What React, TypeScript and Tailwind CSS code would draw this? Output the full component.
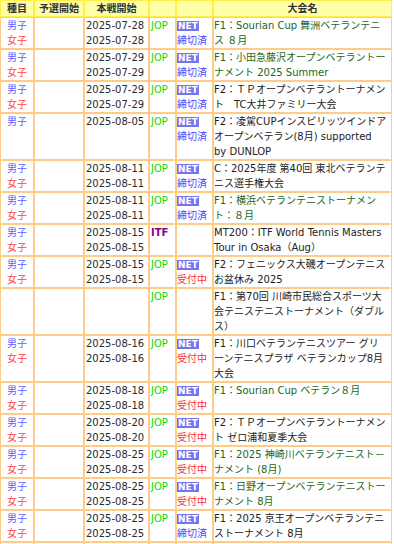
type Row = {
  boys?: boolean
  girls?: boolean
  dates: string[]
  cat: 'JOP' | 'ITF'
  net?: boolean
  status?: '締切済' | '受付中'
  name: string[]
  green?: boolean
}

const rows: Row[] = [
  { boys: true, girls: true, dates: ['2025-07-28', '2025-07-28'], cat: 'JOP', net: true, status: '締切済', name: ['F1：Sourian Cup 舞洲ベテランテニ', 'ス ８月'], green: true },
  { boys: true, girls: true, dates: ['2025-07-29', '2025-07-29'], cat: 'JOP', net: true, status: '締切済', name: ['F1：小田急藤沢オープンベテラントー', 'ナメント 2025 Summer'], green: true },
  { boys: true, girls: true, dates: ['2025-07-29', '2025-07-29'], cat: 'JOP', net: true, status: '締切済', name: ['F2：ＴＰオープンベテラントーナメン', 'ト　TC大井ファミリー大会'] },
  { boys: true, dates: ['2025-08-05'], cat: 'JOP', net: true, status: '締切済', name: ['F2：凌駕CUPインスピリッツインドア', 'オープンベテラン(8月) supported', 'by DUNLOP'] },
  { boys: true, girls: true, dates: ['2025-08-11', '2025-08-11'], cat: 'JOP', net: true, status: '締切済', name: ['C：2025年度 第40回 東北ベテランテ', 'ニス選手権大会'] },
  { boys: true, girls: true, dates: ['2025-08-11', '2025-08-11'], cat: 'JOP', net: true, status: '締切済', name: ['F1：横浜ベテランテニストーナメン', 'ト：８月'], green: true },
  { boys: true, girls: true, dates: ['2025-08-15', '2025-08-15'], cat: 'ITF', name: ['MT200：ITF World Tennis Masters', 'Tour in Osaka（Aug）'] },
  { boys: true, girls: true, dates: ['2025-08-15', '2025-08-15'], cat: 'JOP', net: true, status: '受付中', name: ['F2：フェニックス大磯オープンテニス', 'お盆休み 2025'] },
  { dates: [], cat: 'JOP', name: ['F1：第70回 川崎市民総合スポーツ大', '会テニステニストーナメント（ダブル', 'ス）'] },
  { boys: true, girls: true, dates: ['2025-08-16', '2025-08-16'], cat: 'JOP', net: true, status: '受付中', name: ['F1：川口ベテランテニスツアー グリ', 'ーンテニスプラザ ベテランカップ8月', '大会'] },
  { boys: true, girls: true, dates: ['2025-08-18', '2025-08-18'], cat: 'JOP', net: true, status: '受付中', name: ['F1：Sourian Cup ベテラン８月'], green: true },
  { boys: true, girls: true, dates: ['2025-08-20', '2025-08-20'], cat: 'JOP', net: true, status: '受付中', name: ['F2：ＴＰオープンベテラントーナメン', 'ト ゼロ浦和夏季大会'] },
  { boys: true, girls: true, dates: ['2025-08-25', '2025-08-25'], cat: 'JOP', net: true, status: '受付中', name: ['F1：2025 神崎川ベテランテニスト－', 'ナメント (8月)'], green: true },
  { boys: true, girls: true, dates: ['2025-08-25', '2025-08-25'], cat: 'JOP', net: true, status: '受付中', name: ['F1：日野オープンベテランテニストー', 'ナメント 8月'], green: true },
  { boys: true, girls: true, dates: ['2025-08-25', '2025-08-25'], cat: 'JOP', net: true, status: '締切済', name: ['F1：2025 京王オープンベテランテニ', 'ストーナメント 8月'] },
]

const th = 'border border-[#ffee44] bg-[#ffffaa] p-0 text-center font-bold text-[#333]'
const td = 'border border-[#ffcc88] bg-white p-0 align-top'

function TourRow({ row }: { row: Row }) {
  return (
    <tr>
      <td className={`${td} text-center`}>
        {row.boys && <div className="text-[#6060ff]">男子</div>}
        {row.girls && <div className="text-[#ff4444]">女子</div>}
      </td>
      <td className={td} />
      <td className={`${td} px-[1px] text-[#2a2a2a]`}>
        {row.dates.map((d, i) => (
          <div key={i}>{d}</div>
        ))}
      </td>
      <td className={`${td} px-[1px]`}>
        {row.cat === 'JOP' ? (
          <span className="text-[#00dd00]">JOP</span>
        ) : (
          <span className="font-bold text-[#880088]">ITF</span>
        )}
      </td>
      <td className={td}>
        {row.net && (
          <div className="flex h-[15px] items-center">
            <span className="bg-[#7474ee] px-[1px] text-[9px] font-bold leading-[10px] text-white">NET</span>
          </div>
        )}
        {row.status && (
          <div className={row.status === '締切済' ? 'text-[#4848ff]' : 'text-[#ff3030]'}>{row.status}</div>
        )}
      </td>
      <td className={`${td} whitespace-pre ${row.green ? 'text-[#226622]' : 'text-[#222]'}`}>
        {row.name.map((l, i) => (
          <div key={i}>{l}</div>
        ))}
      </td>
    </tr>
  )
}

export default function App() {
  return (
    <div className="h-[544px] overflow-hidden bg-white">
      <table className="w-[392px] table-fixed border-separate border-spacing-0 font-['DejaVu_Sans','Noto_Sans_CJK_JP',sans-serif] text-[10px] leading-[15px]">
        <colgroup>
          <col className="w-[34px]" />
          <col className="w-[50px]" />
          <col className="w-[65px]" />
          <col className="w-[27px]" />
          <col className="w-[37px]" />
          <col className="w-[179px]" />
        </colgroup>
        <thead>
          <tr>
            <th className={th}>種目</th>
            <th className={th}>予選開始</th>
            <th className={th}>本戦開始</th>
            <th className={th} />
            <th className={th} />
            <th className={th}>大会名</th>
          </tr>
        </thead>
        <tbody>
          {rows.map((r, i) => (
            <TourRow key={i} row={r} />
          ))}
          <tr className="h-[32px]">
            <td className={td} />
            <td className={td} />
            <td className={td} />
            <td className={td} />
            <td className={td} />
            <td className={td} />
          </tr>
        </tbody>
      </table>
    </div>
  )
}
